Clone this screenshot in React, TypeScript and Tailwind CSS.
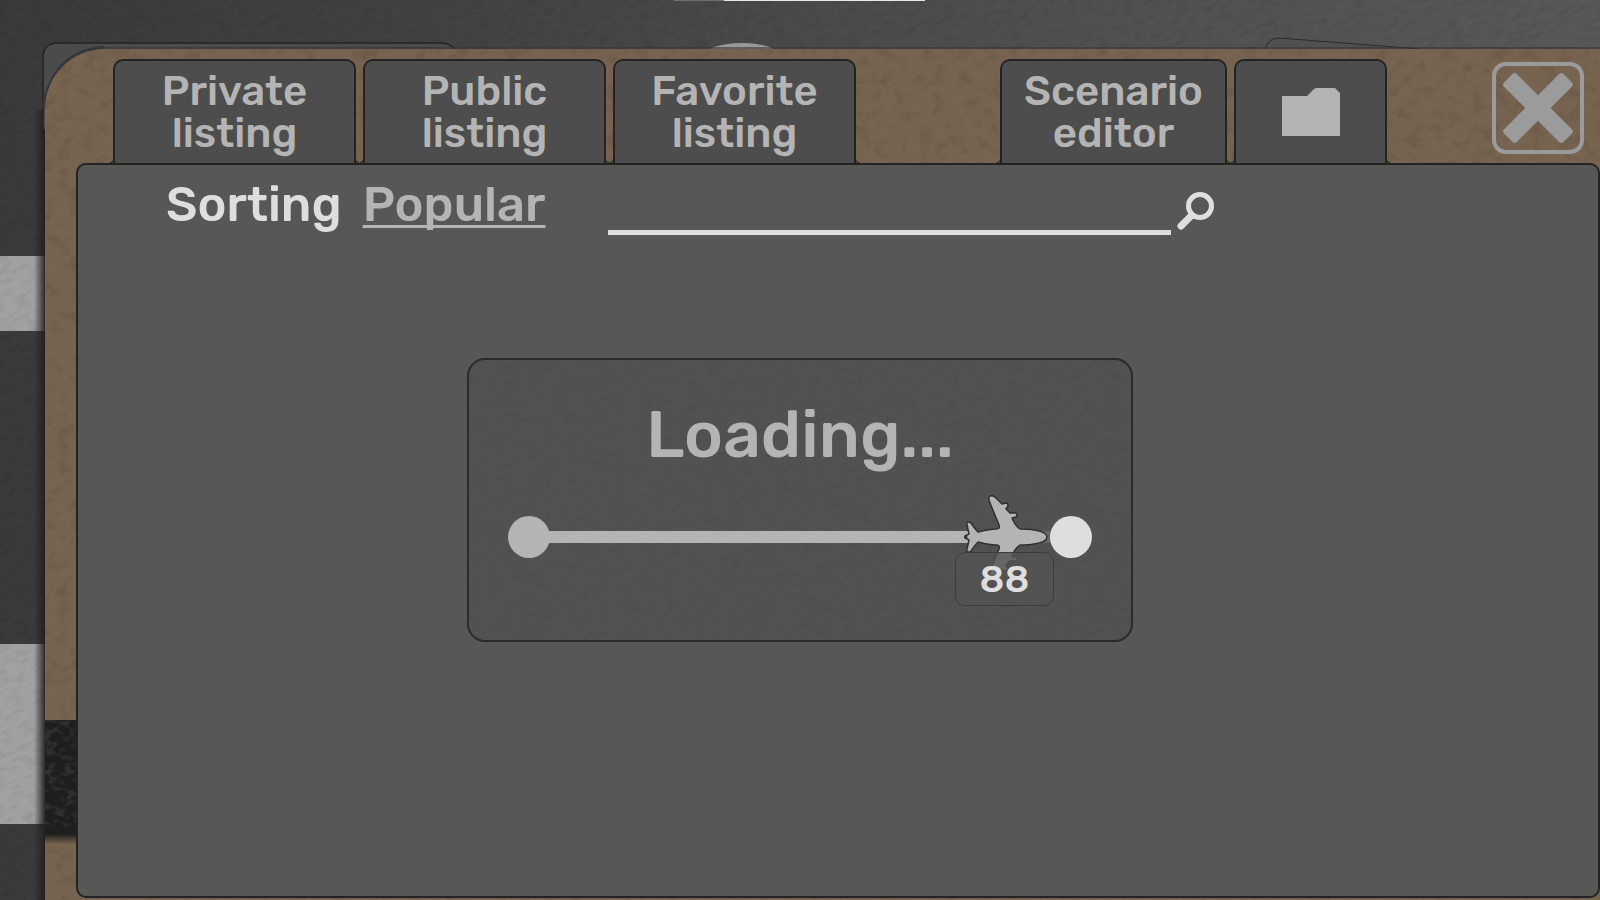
import { useState } from 'react';
import clsx from 'clsx';

const LISTING_TABS = ['Private', 'Public', 'Favorite'];
const SORT_MODES = ['Popular', 'Newest', 'Oldest'];

const TAB_BASE = `
  relative flex h-[104px] items-center justify-center rounded-t-[10px] border-2 border-b-0
  border-[#232323] bg-[#4d4d4d] text-center text-[42px] leading-[42px] font-medium text-[#b4b4b4]
  before:absolute before:bottom-0 before:-left-[5px] before:size-[4px] before:rounded-br-[4px]
  before:border-r before:border-b before:border-[#232323]
  after:absolute after:bottom-0 after:-right-[5px] after:size-[4px] after:rounded-bl-[4px]
  after:border-l after:border-b after:border-[#232323]
`;

// The airfield behind the board: tarmac, runway stripes, edges of other cards
function Scene() {
  return (
    <svg
      aria-hidden="true"
      className="absolute inset-0 h-full w-full"
      viewBox="0 0 1600 900"
      preserveAspectRatio="xMinYMin slice"
    >
      <defs>
        <linearGradient id="tarmac" x1="0" x2="1" y1="0" y2="0">
          <stop offset="0" stopColor="#3a3a3c" />
          <stop offset="0.25" stopColor="#414142" />
          <stop offset="0.45" stopColor="#484849" />
          <stop offset="0.65" stopColor="#4f4f4f" />
          <stop offset="1" stopColor="#585857" />
        </linearGradient>
        <linearGradient id="boardShadow" x1="0" x2="1" y1="0" y2="0">
          <stop offset="0" stopColor="#1e1e1e" stopOpacity="0" />
          <stop offset="1" stopColor="#1e1e1e" stopOpacity="0.9" />
        </linearGradient>
        <filter id="scratches" x="0" y="0" width="100%" height="100%" colorInterpolationFilters="sRGB">
          <feTurbulence type="fractalNoise" baseFrequency="0.08 0.2" numOctaves="3" seed="4" />
          <feColorMatrix values="0 0 0 0 0  0 0 0 0 0  0 0 0 0 0  0.9 0 0 0 -0.4" />
        </filter>
      </defs>
      <rect width="1600" height="900" fill="url(#tarmac)" />
      <rect y="256" width="46" height="75" fill="#a1a1a1" />
      <rect y="644" width="46" height="180" fill="#a1a1a1" />
      <g transform="rotate(-25)">
        <rect x="-400" y="-20" width="2000" height="1600" filter="url(#scratches)" opacity="0.2" />
      </g>
      <rect x="34" y="110" width="11" height="790" fill="url(#boardShadow)" />
      <path d="M43 130V58q0-15 15-15H442q8 0 14 7V130Z" fill="#4b4b4b" stroke="#232323" strokeWidth="1.500" />
      <path d="M44 108Q54 52 104 48" fill="none" stroke="#35363c" strokeWidth="5" />
      <ellipse cx="742" cy="56" rx="38" ry="13" fill="#999" />
      <path d="M1265 49q3-11 14-11L1421 49Z" fill="#505050" />
      <path d="M1265 49q3-11 14-11L1421 49" fill="none" stroke="#2b2b2b" />
      <rect y="47" x="100" width="1500" height="2" fill="#35363c" opacity="0.6" />
      <rect x="674" width="50" height="1" fill="#707070" />
      <rect x="724" width="201" height="1" fill="#e8e8e8" />
    </svg>
  );
}

function CorkTexture() {
  return (
    <svg aria-hidden="true" className="absolute inset-0 h-full w-full">
      <filter id="cork" x="0" y="0" width="100%" height="100%" colorInterpolationFilters="sRGB">
        <feTurbulence type="fractalNoise" baseFrequency="0.08" numOctaves="3" seed="11" />
        <feColorMatrix values="0 0 0 0 0.2  0 0 0 0 0.15  0 0 0 0 0.08  3 0 0 0 -1.5" />
      </filter>
      <rect width="100%" height="100%" filter="url(#cork)" opacity="0.12" />
    </svg>
  );
}

// Leather strap wrapped around the left edge of the board
function Strap() {
  return (
    <svg aria-hidden="true" className="absolute top-[671px] left-0 h-[124px] w-8" viewBox="0 0 32 124">
      <defs>
        <linearGradient id="strapFade" x1="0" x2="0" y1="0" y2="1">
          <stop offset="0" stopColor="#1f1e1c" />
          <stop offset="1" stopColor="#1f1e1c" stopOpacity="0" />
        </linearGradient>
        <filter id="leather" x="0" y="0" width="100%" height="100%" colorInterpolationFilters="sRGB">
          <feTurbulence type="fractalNoise" baseFrequency="0.1 0.14" numOctaves="2" seed="7" />
          <feColorMatrix values="0 0 0 0 0.24  0 0 0 0 0.24  0 0 0 0 0.25  5 0 0 0 -2.4" />
        </filter>
      </defs>
      <rect width="32" height="114" fill="#1f1e1c" />
      <rect width="32" height="107" filter="url(#leather)" opacity="0.6" />
      <rect y="114" width="32" height="10" fill="url(#strapFade)" />
    </svg>
  );
}

function FolderIcon() {
  return (
    <svg aria-hidden="true" className="h-12 w-[58px]" viewBox="0 0 58 48" fill="#b4b4b4">
      <path d="M0 9Q0 8 1 8H25L32 1Q33 0 35 0H53L58 5V48H0Z" />
    </svg>
  );
}

function CloseIcon() {
  return (
    <svg aria-hidden="true" className="size-[92px]" viewBox="0 0 92 92">
      <rect x="2" y="2" width="88" height="88" rx="12" fill="none" stroke="#9b9b9b" strokeWidth="4" />
      <g fill="#9b9b9b">
        <rect x="4" y="37" width="84" height="18" rx="3" transform="rotate(45 46 46)" />
        <rect x="4" y="37" width="84" height="18" rx="3" transform="rotate(-45 46 46)" />
      </g>
    </svg>
  );
}

function SearchIcon() {
  return (
    <svg aria-hidden="true" className="h-[38px] w-[37px]" viewBox="0 0 37 38" fill="none" stroke="#dedede">
      <circle cx="23" cy="14" r="11.500" strokeWidth="5" />
      <path d="M14 24 4 34" strokeWidth="7" strokeLinecap="round" />
    </svg>
  );
}

function PlaneIcon() {
  return (
    <svg
      aria-hidden="true"
      className="absolute -top-[42px] -left-[42px] h-[84px] w-[84px]"
      viewBox="0 0 84 84"
      fill="#b4b4b4"
      stroke="#303030"
      strokeWidth="1.500"
      strokeLinejoin="round"
    >
      <path d="M83 42C83 38 77 36 70 35 65 34 61 34 56 34 53 32 50 28 48 23L52 22Q54 20 52 18L46 18 42 14 44 11Q44 8 42 8L38 9C34 5 32 2 29 1 26 0 24 2 25 5 28 14 32 22 35 30 36 33 35 34 32 34 25 34 18 36 14 37 12 35 9 31 7 28 5 26 2 27 3 30L5 39 1 41Q0 42 3 42 0 42 1 43L5 45 3 54C2 57 5 58 7 56 9 53 12 49 14 47 18 48 25 50 32 50 35 50 36 51 35 54 32 62 28 70 25 79 24 82 26 84 29 83 32 82 34 79 38 75L42 76Q44 76 44 73L42 70 46 66 52 66Q54 64 52 62L48 61C50 56 53 52 56 50 61 50 65 50 70 49 77 48 83 46 83 42Z" />
    </svg>
  );
}

function LoadingCard({ progress }: { progress: number }) {
  return (
    <div className="pointer-events-none absolute inset-0 flex items-center justify-center pt-[100px]">
      <section
        role="status"
        className="relative h-[284px] w-[666px] overflow-hidden rounded-[18px] border-2 border-[#2b2b2c] bg-[#525252] px-[39px] pt-[34px]"
      >
        <svg aria-hidden="true" className="absolute inset-0 h-full w-full">
          <g transform="rotate(-25)">
            <rect x="-200" width="1000" height="700" filter="url(#scratches)" opacity="0.12" />
          </g>
        </svg>
        <h2 className="relative text-center text-[66px] leading-[82px] font-medium text-[#b4b4b4]">
          Loading...
        </h2>
        <div className="relative mt-10 flex h-[42px] items-center">
          <span className="size-[42px] rounded-full bg-[#b4b4b4]" />
          {/* the track runs from the centre of one stop to the centre of the other */}
          <div className="relative -mx-[21px] h-3 flex-1 bg-[#666]">
            <div className="h-full bg-[#b4b4b4]" style={{ width: `${progress}%` }} />
            <div className="absolute top-1/2" style={{ left: `${progress}%` }}>
              <PlaneIcon />
              <div className="absolute top-[15px] -left-[51px] flex h-[54px] w-[99px] items-center justify-center rounded-[10px] border border-[#3c3c3c] bg-[#525252]/80 text-[38px] leading-[40px] font-medium text-[#dedede]">
                {progress}
              </div>
            </div>
          </div>
          <span className="relative size-[42px] rounded-full bg-[#dedede]" />
        </div>
      </section>
    </div>
  );
}

export default function App() {
  const [sort, setSort] = useState(0);
  const [query, setQuery] = useState('');

  return (
    <main className="relative flex h-screen flex-col overflow-hidden bg-[#39393b] pt-[49px] pl-[45px] font-['Rubik','Inter',sans-serif]">
      <Scene />

      <div className="relative flex min-h-0 flex-1 flex-col overflow-hidden rounded-tl-[60px] bg-[#766350] pt-[10px] pb-[2px] pl-[31px]">
        <CorkTexture />
        <Strap />

        <header className="relative flex items-start pr-4 pl-[37px]">
          <nav className="flex gap-[7px]">
            {LISTING_TABS.map((name) => (
              <button key={name} type="button" className={clsx(TAB_BASE, 'w-[243px]')}>
                <span>
                  {name}
                  <br />
                  listing
                </span>
              </button>
            ))}
          </nav>
          <div className="ml-36 flex gap-[7px]">
            <button type="button" className={clsx(TAB_BASE, 'w-[227px]')}>
              <span>
                Scenario
                <br />
                editor
              </span>
            </button>
            <button type="button" aria-label="Open folder" className={clsx(TAB_BASE, 'w-[153px]')}>
              <FolderIcon />
            </button>
          </div>
          <button type="button" aria-label="Close" className="mt-[3px] ml-auto">
            <CloseIcon />
          </button>
        </header>

        <div className="relative min-h-0 flex-1 rounded-[10px] border-2 border-[#232323] bg-[#575755] pl-[88px]">
          <div className="flex h-[76px] items-start text-[49px] leading-[60px] font-medium">
            <span className="mt-[9px] text-[#dedede]">Sorting</span>
            <button
              type="button"
              onClick={() => setSort((sort + 1) % SORT_MODES.length)}
              className="mt-[9px] ml-[21px] min-w-[184px] text-left text-[#b4b4b4] underline decoration-3 underline-offset-4 [text-decoration-skip-ink:none]"
            >
              {SORT_MODES[sort]}
            </button>
            <form
              className="ml-[61px] flex items-start"
              onSubmit={(e) => e.preventDefault()}
            >
              <input
                type="text"
                aria-label="Search scenarios"
                value={query}
                onChange={(e) => setQuery(e.target.value)}
                className="h-[70px] w-[563px] border-b-[5px] border-[#dedede] bg-transparent text-[40px] text-[#dedede] outline-none"
              />
              <button type="submit" aria-label="Search" className="mt-[27px] ml-[6px]">
                <SearchIcon />
              </button>
            </form>
          </div>
        </div>
      </div>

      <LoadingCard progress={88} />
    </main>
  );
}
